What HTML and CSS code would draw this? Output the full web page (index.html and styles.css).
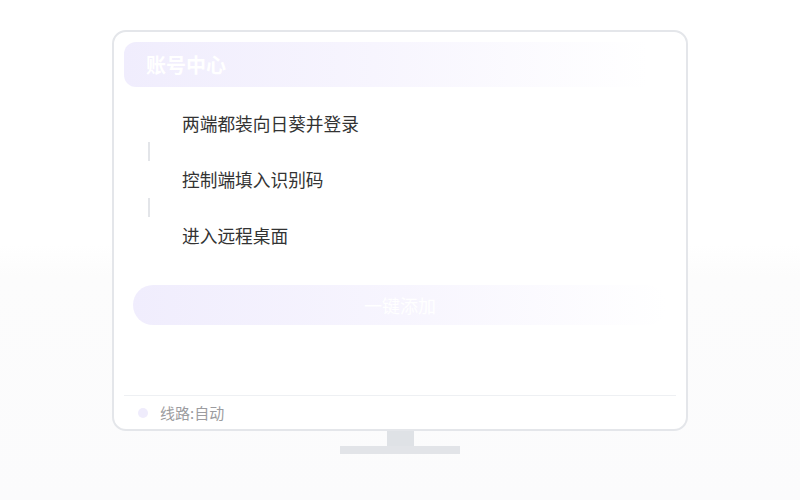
FILE: index.html
```html
<!DOCTYPE html>
<html lang="zh-CN">
<head>
    <meta charset="UTF-8">
    <meta name="viewport" content="width=device-width, initial-scale=1.0">
    <title>账号中心</title>
    <link rel="stylesheet" href="styles.css">
</head>
<body>
    <div class="monitor">
        <div class="screen">
            <div class="header">账号中心</div>

            <div class="steps">
                <div class="step">两端都装向日葵并登录</div>
                <div class="connector"></div>
                <div class="step">控制端填入识别码</div>
                <div class="connector"></div>
                <div class="step">进入远程桌面</div>
            </div>

            <button type="button" class="button">一键添加</button>

            <div class="footer">
                <span class="dot"></span>
                <span>线路:自动</span>
            </div>
        </div>
        <div class="neck"></div>
        <div class="base"></div>
    </div>
</body>
</html>
```

FILE: styles.css
```css
body {
    font-family: "Noto Sans CJK SC", "Noto Sans", sans-serif;
    background: linear-gradient(180deg, #ffffff 0, #ffffff 245px, #fcfcfc 275px, #fbfbfc 100%);
    color: #333;
    margin: 0;
    padding: 30px 0 0;
    min-height: 100vh;
    box-sizing: border-box;
}
.monitor {
    display: flex;
    flex-direction: column;
    align-items: center;
}
.screen {
    box-sizing: border-box;
    width: 576px;
    height: 401px;
    padding: 10px 10px 0;
    background: white;
    border: 2px solid #e4e6ea;
    border-radius: 14px;
    display: flex;
    flex-direction: column;
}
.header {
    height: 45px;
    line-height: 45px;
    padding-left: 22px;
    border-radius: 12px;
    background: linear-gradient(90deg, #f0edfd 0%, #f7f5fe 45%, #ffffff 95%);
    color: white;
    font-size: 20px;
    font-weight: bold;
}
.steps {
    margin-top: 18px;
    display: flex;
    flex-direction: column;
}
.step {
    height: 37px;
    line-height: 37px;
    padding-left: 58px;
    font-size: 17.7px;
}
.connector {
    width: 2px;
    height: 19px;
    margin-left: 24px;
    background: #e3e5e9;
}
.button {
    margin: 31px 9px 0;
    height: 40px;
    border: none;
    border-radius: 20px;
    background: linear-gradient(90deg, #f0edfd 0%, #f7f5fe 50%, #ffffff 100%);
    color: white;
    font-family: inherit;
    font-size: 18px;
    cursor: pointer;
}
.footer {
    margin-top: auto;
    height: 33px;
    border-top: 1px solid #eef0f3;
    display: flex;
    align-items: center;
    padding-left: 14px;
    font-size: 15px;
    color: #9c9ca0;
}
.dot {
    width: 10px;
    height: 10px;
    border-radius: 50%;
    background: #efecfc;
    margin-right: 12px;
}
.neck {
    width: 27px;
    height: 15px;
    background: #dfe2e6;
}
.base {
    width: 120px;
    height: 8px;
    background: #e2e4e8;
}
```
